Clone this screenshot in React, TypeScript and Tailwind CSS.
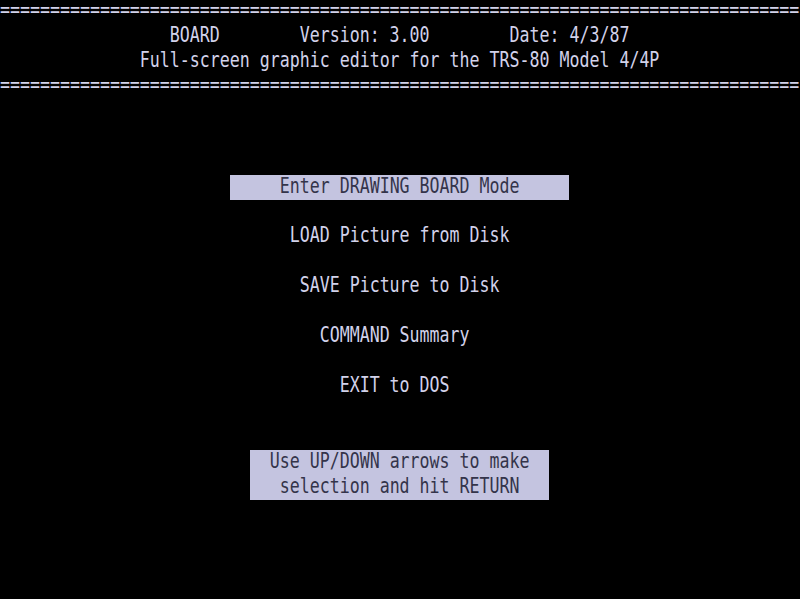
import React from 'react';

type Seg = string | { hl: string };

const EQ = '='.repeat(80);
const sp = (n: number) => ' '.repeat(n);

// 80 x 24 text screen, one entry per row
const screen: Seg[][] = [
  [EQ],
  [sp(17) + 'BOARD' + sp(8) + 'Version: 3.00' + sp(8) + 'Date: 4/3/87'],
  [sp(14) + 'Full-screen graphic editor for the TRS-80 Model 4/4P'],
  [EQ],
  [''],
  [''],
  [''],
  [sp(23), { hl: sp(5) + 'Enter DRAWING BOARD Mode' + sp(5) }],
  [''],
  [sp(29) + 'LOAD Picture from Disk'],
  [''],
  [sp(30) + 'SAVE Picture to Disk'],
  [''],
  [sp(32) + 'COMMAND Summary'],
  [''],
  [sp(34) + 'EXIT to DOS'],
  [''],
  [''],
  [sp(25), { hl: sp(2) + 'Use UP/DOWN arrows to make' + sp(2) }],
  [sp(25), { hl: sp(3) + 'selection and hit RETURN' + sp(3) }],
  [''],
  [''],
  [''],
  [''],
];

function Row({ segs }: { segs: Seg[] }) {
  return (
    <div className="flex h-[25px] leading-[25px] whitespace-pre">
      {segs.map((seg, i) =>
        typeof seg === 'string' ? (
          <span key={i} className="inline-block scale-y-125 -translate-y-[2px]">
            {seg}
          </span>
        ) : (
          <span key={i} className="inline-block h-[25px] bg-[#c4c4e0] text-[#34344a]">
            <span className="inline-block scale-y-125 -translate-y-[1px]">{seg.hl}</span>
          </span>
        )
      )}
    </div>
  );
}

export default function App() {
  return (
    <div className="w-[800px] h-[599px] overflow-hidden bg-black text-[#d2d2ea] text-[16.6px] font-['DejaVu_Sans_Mono',monospace]">
      {screen.map((segs, i) => (
        <Row key={i} segs={segs} />
      ))}
    </div>
  );
}
